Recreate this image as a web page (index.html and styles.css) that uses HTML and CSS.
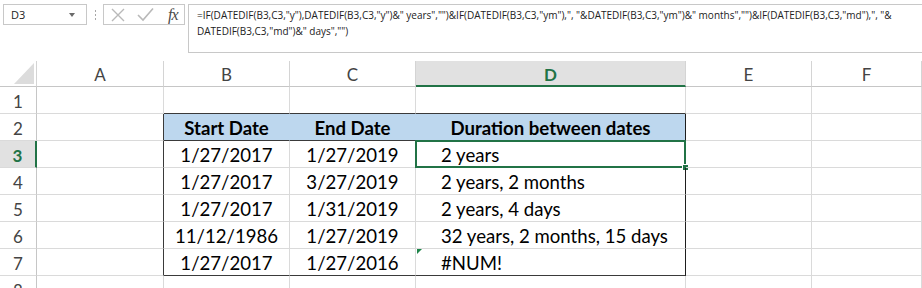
FILE: index.html
```html
<!DOCTYPE html>
<html lang="en">
<head>
    <meta charset="UTF-8">
    <meta name="viewport" content="width=device-width, initial-scale=1.0">
    <title>DATEDIF - Duration between dates</title>
    <link rel="stylesheet" href="styles.css">
</head>
<body>
    <div class="toolbar">
        <div class="namebox">
            <span>D3</span>
            <span class="arrow"></span>
        </div>
        <div class="dots"><i></i><i></i><i></i></div>
        <div class="fbtns">
            <svg class="ico" width="14" height="14" viewBox="0 0 14 14">
                <path d="M1 1 L13 13 M13 1 L1 13" stroke="#b9b9b9" stroke-width="1.4" fill="none"/>
            </svg>
            <svg class="ico" width="17" height="15" viewBox="0 0 17 15">
                <path d="M1 8 L6 13 L16 1.5" stroke="#b9b9b9" stroke-width="1.6" fill="none"/>
            </svg>
            <span class="fx">fx</span>
        </div>
        <div class="formula">=IF(DATEDIF(B3,C3,"y"),DATEDIF(B3,C3,"y")&amp;" years","")&amp;IF(DATEDIF(B3,C3,"ym"),", "&amp;DATEDIF(B3,C3,"ym")&amp;" months","")&amp;IF(DATEDIF(B3,C3,"md"),", "&amp;<br>DATEDIF(B3,C3,"md")&amp;" days","")</div>
    </div>

    <div class="sheet">
        <!-- column headers -->
        <div class="c ch corner">
            <svg width="20" height="21" viewBox="0 0 20 21"><polygon points="20,0 20,21 0,21" fill="#dcdcdc"/></svg>
        </div>
        <div class="c ch">A</div>
        <div class="c ch">B</div>
        <div class="c ch">C</div>
        <div class="c ch sel-col">D</div>
        <div class="c ch">E</div>
        <div class="c ch">F</div>

        <!-- row 1 -->
        <div class="c rh">1</div>
        <div class="c"></div>
        <div class="c top"></div>
        <div class="c top"></div>
        <div class="c top"></div>
        <div class="c"></div>
        <div class="c"></div>

        <!-- row 2 -->
        <div class="c rh">2</div>
        <div class="c left"></div>
        <div class="c hd">Start Date</div>
        <div class="c hd">End Date</div>
        <div class="c hd hd-end">Duration between dates</div>
        <div class="c"></div>
        <div class="c"></div>

        <!-- row 3 -->
        <div class="c rh sel-row">3</div>
        <div class="c left"></div>
        <div class="c ctr">1/27/2017</div>
        <div class="c ctr">1/27/2019</div>
        <div class="c ind right active">2 years<span class="handle"></span></div>
        <div class="c"></div>
        <div class="c"></div>

        <!-- row 4 -->
        <div class="c rh">4</div>
        <div class="c left"></div>
        <div class="c ctr">1/27/2017</div>
        <div class="c ctr">3/27/2019</div>
        <div class="c ind right">2 years, 2 months</div>
        <div class="c"></div>
        <div class="c"></div>

        <!-- row 5 -->
        <div class="c rh">5</div>
        <div class="c left"></div>
        <div class="c ctr">1/27/2017</div>
        <div class="c ctr">1/31/2019</div>
        <div class="c ind right">2 years, 4 days</div>
        <div class="c"></div>
        <div class="c"></div>

        <!-- row 6 -->
        <div class="c rh">6</div>
        <div class="c left"></div>
        <div class="c ctr">11/12/1986</div>
        <div class="c ctr">1/27/2019</div>
        <div class="c ind right">32 years, 2 months, 15 days</div>
        <div class="c"></div>
        <div class="c"></div>

        <!-- row 7 -->
        <div class="c rh">7</div>
        <div class="c left"></div>
        <div class="c ctr bottom">1/27/2017</div>
        <div class="c ctr bottom">1/27/2016</div>
        <div class="c ind right bottom err">#NUM!</div>
        <div class="c"></div>
        <div class="c"></div>

        <!-- row 8 -->
        <div class="c rh">8</div>
        <div class="c"></div>
        <div class="c"></div>
        <div class="c"></div>
        <div class="c"></div>
        <div class="c"></div>
        <div class="c"></div>
    </div>
</body>
</html>
```

FILE: styles.css
```css
body {
    margin: 0;
    background: #fff;
    font-family: Lato, "Open Sans", sans-serif;
    color: #000;
    overflow: hidden;
}

/* formula bar */
.toolbar {
    display: flex;
    align-items: flex-start;
    height: 61px;
    padding: 4px 0 0 3px;
    box-sizing: border-box;
    font-family: "Open Sans", sans-serif;
    font-size: 10px;
    color: #222;
}
.namebox {
    width: 84px;
    height: 21px;
    box-sizing: border-box;
    border: 1px solid #c8c8c8;
    display: flex;
    align-items: center;
    justify-content: space-between;
    padding: 0 11px 0 7px;
    font-size: 11px;
}
.arrow {
    width: 0;
    height: 0;
    border-left: 3px solid transparent;
    border-right: 3px solid transparent;
    border-top: 4px solid #6a6a6a;
}
.dots {
    width: 16px;
    height: 21px;
    display: flex;
    flex-direction: column;
    align-items: center;
    justify-content: center;
    gap: 2px;
}
.dots i {
    width: 1px;
    height: 2px;
    background: #a8a8a8;
}
.fbtns {
    width: 82px;
    height: 21px;
    box-sizing: border-box;
    border: 1px solid #c8c8c8;
    display: flex;
    align-items: center;
    padding-left: 7px;
    gap: 12px;
}
.fx {
    font-family: "Liberation Serif", serif;
    font-style: italic;
    font-size: 16px;
    color: #4a4a4a;
    letter-spacing: -1px;
    margin-left: 2px;
}
.formula {
    flex: 1;
    margin-left: 3px;
    height: 49px;
    box-sizing: border-box;
    border: 1px solid #c8c8c8;
    border-right: none;
    padding: 2px 0 0 8px;
    line-height: 16px;
    white-space: nowrap;
}

/* grid */
.sheet {
    display: grid;
    grid-template-columns: 37px 127px 126px 126px 270px 126px 1fr;
    grid-template-rows: 26px;
    grid-auto-rows: 27px;
}
.c {
    position: relative;
    box-sizing: border-box;
    border-right: 1px solid #dadada;
    border-bottom: 1px solid #dadada;
    display: flex;
    align-items: center;
    font-size: 18.6px;
    padding-top: 2px;
    white-space: nowrap;
}
.ch {
    justify-content: center;
    color: #444;
    font-size: 17px;
    border-right-color: #d4d4d4;
    border-bottom-color: #c6c6c6;
}
.corner {
    justify-content: flex-end;
    align-items: flex-end;
    padding: 0 2px 2px 0;
}
.rh {
    justify-content: center;
    color: #444;
    font-size: 17px;
    border-right-color: #c6c6c6;
}
.sel-col {
    background: #e1e1e1;
    color: #217346;
    font-weight: bold;
    border-bottom: 2px solid #217346;
}
.sel-row {
    background: #e1e1e1;
    color: #217346;
    font-weight: bold;
    border-right: 2px solid #217346;
}
.ctr {
    justify-content: center;
}
.ind {
    padding-left: 25px;
}

/* table borders */
.top {
    border-bottom-color: #3a3a3a;
}
.left {
    border-right-color: #3a3a3a;
}
.right {
    border-right-color: #1e1e1e;
}
.bottom {
    border-bottom-color: #3a3a3a;
}
.hd {
    background: #bdd7ee;
    font-weight: bold;
    justify-content: center;
    border-right-color: #bdd7ee;
    border-bottom-color: #3a3a3a;
}
.hd-end {
    border-right-color: #1e1e1e;
}

/* active cell */
.active::before {
    content: "";
    position: absolute;
    left: -1px;
    top: -1px;
    width: 271px;
    height: 28px;
    box-sizing: border-box;
    border: 2px solid #217346;
}
.handle {
    position: absolute;
    right: -4px;
    bottom: -4px;
    width: 5px;
    height: 5px;
    background: #217346;
    border: 1px solid #fff;
}
.err::before {
    content: "";
    position: absolute;
    left: 1px;
    top: 0;
    border-top: 5px solid #1e8449;
    border-right: 5px solid transparent;
}
```
